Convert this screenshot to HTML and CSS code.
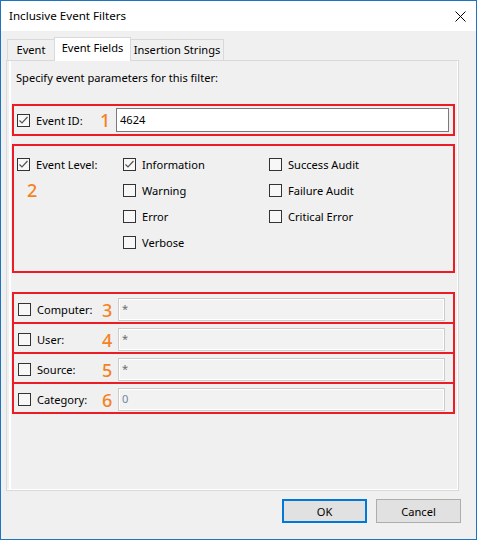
FILE: index.html
```html
<!DOCTYPE html>
<html>
<head>
<meta charset="utf-8">
<link rel="stylesheet" href="styles.css">
</head>
<body>
<div class="window">
  <div class="titlebar">
    <span class="title">Inclusive Event Filters</span>
    <svg class="close" width="11" height="11" viewBox="0 0 11 11"><path d="M0.5 0.5 L10.5 10.5 M10.5 0.5 L0.5 10.5" stroke="#000" stroke-width="1" fill="none"/></svg>
  </div>
  <div class="body">
    <div class="tabs">
      <div class="tab tab-event">Event</div>
      <div class="tab tab-sel">Event Fields</div>
      <div class="tab tab-ins">Insertion Strings</div>
    </div>
    <div class="panel">
      <div class="intro">Specify event parameters for this filter:</div>

      <div class="box box-id">
        <div class="cell-label"><span class="cb checked"><svg width="11" height="11" viewBox="0 0 11 11"><path d="M1.5 5.5 L4 8 L9.5 2" stroke="#555" stroke-width="1.2" fill="none"/></svg></span><span>Event ID:</span></div>
        <div class="num num-id">1</div>
        <div class="input input-id">4624</div>
      </div>

      <div class="box box-level">
        <div class="grid">
          <div class="item"><span class="cb checked"><svg width="11" height="11" viewBox="0 0 11 11"><path d="M1.5 5.5 L4 8 L9.5 2" stroke="#555" stroke-width="1.2" fill="none"/></svg></span><span>Event Level:</span></div>
          <div class="item"><span class="cb checked"><svg width="11" height="11" viewBox="0 0 11 11"><path d="M1.5 5.5 L4 8 L9.5 2" stroke="#555" stroke-width="1.2" fill="none"/></svg></span><span>Information</span></div>
          <div class="item"><span class="cb"></span><span>Success Audit</span></div>
          <div class="num num-two">2</div>
          <div class="item"><span class="cb"></span><span>Warning</span></div>
          <div class="item"><span class="cb"></span><span>Failure Audit</span></div>
          <div></div>
          <div class="item"><span class="cb"></span><span>Error</span></div>
          <div class="item"><span class="cb"></span><span>Critical Error</span></div>
          <div></div>
          <div class="item"><span class="cb"></span><span>Verbose</span></div>
          <div></div>
        </div>
      </div>

      <div class="stack">
        <div class="box row">
          <div class="cell-label2"><span class="cb"></span><span>Computer:</span></div>
          <div class="num num-row">3</div>
          <div class="input disabled">*</div>
        </div>
        <div class="box row">
          <div class="cell-label2"><span class="cb"></span><span>User:</span></div>
          <div class="num num-row">4</div>
          <div class="input disabled">*</div>
        </div>
        <div class="box row">
          <div class="cell-label2"><span class="cb"></span><span>Source:</span></div>
          <div class="num num-row">5</div>
          <div class="input disabled">*</div>
        </div>
        <div class="box row">
          <div class="cell-label2"><span class="cb"></span><span>Category:</span></div>
          <div class="num num-row">6</div>
          <div class="input disabled zero">0</div>
        </div>
      </div>
    </div>
    <div class="footer">
      <div class="btn btn-ok">OK</div>
      <div class="btn btn-cancel">Cancel</div>
    </div>
  </div>
</div>
</body>
</html>
```
FILE: styles.css
```css
* { box-sizing: border-box; }
html, body { margin: 0; padding: 0; }
body {
  width: 477px;
  height: 540px;
  font-family: "Noto Sans", "DejaVu Sans", sans-serif;
  font-size: 11.1px;
  color: #000;
  overflow: hidden;
  white-space: nowrap;
}
.window {
  width: 477px;
  height: 540px;
  border: 1px solid #1e74bf;
  background: #f0f0f0;
  display: flex;
  flex-direction: column;
}
.titlebar {
  height: 30px;
  background: #fff;
  display: flex;
  align-items: center;
  justify-content: space-between;
  padding: 0 10px 0 8px;
}
.title { font-size: 11.6px; line-height: 16px; }
.close { display: block; }
.body {
  flex: 1;
  display: flex;
  flex-direction: column;
  padding: 6px 0 0 5px;
}
.tabs {
  display: flex;
  align-items: flex-end;
  height: 23px;
  margin-left: 1px;
}
.tab {
  height: 21px;
  line-height: 20px;
  text-align: center;
  border-top: 1px solid #d9d9d9;
  background: #f0f0f0;
}
.tab-event { width: 47px; border-left: 1px solid #d9d9d9; }
.tab-sel {
  width: 77px;
  height: 24px;
  line-height: 20px;
  background: #fff;
  border: 1px solid #d9d9d9;
  border-bottom: none;
  margin-bottom: -1px;
  position: relative;
  z-index: 1;
}
.tab-ins { width: 93px; border-right: 1px solid #d9d9d9; }
.panel {
  width: 453px;
  height: 431px;
  border: 1px solid #d9d9d9;
  box-shadow: inset -1px -1px 0 #fff, inset 2px 0 0 #f0f0f0, inset 4px 0 0 #fff;
  padding: 9px 3px 0 5px;
}
.intro { line-height: 16px; padding-left: 4px; }
.box { border: 2px solid #ed1c24; }
.box-id {
  margin-top: 18px;
  height: 32px;
  display: flex;
  align-items: center;
  padding: 0 4px 0 3px;
}
.cell-label, .cell-label2, .item {
  display: flex;
  align-items: center;
  gap: 6px;
}
.cell-label { width: 80px; }
.cb {
  width: 13px;
  height: 13px;
  border: 1px solid #333;
  background: #f7f7f7;
  display: flex;
  align-items: center;
  justify-content: center;
  flex: none;
}
.cb svg { display: block; }
.num {
  color: #f5821f;
  font-size: 18px;
  line-height: 20px;
  font-weight: 500;
}
.num-id { width: 19px; padding-left: 3px; }
.input {
  flex: 1;
  height: 24px;
  line-height: 20px;
  padding: 1px 0 0 3px;
}
.input-id { border: 1px solid #7a7a7a; background: #fff; }
.box-level {
  margin-top: 8px;
  height: 129px;
  padding: 5px 0 0 3px;
}
.grid {
  display: grid;
  grid-template-columns: 106px 146px 1fr;
  grid-auto-rows: 26px;
}
.num-two { padding-left: 10px; align-self: center; }
.stack { margin-top: 19px; display: flex; flex-direction: column; }
.row {
  height: 32px;
  display: flex;
  align-items: center;
  padding: 3px 8px 0 4px;
}
.row + .row { margin-top: -2px; }
.cell-label2 { width: 82px; }
.num-row { width: 18px; padding-left: 2px; }
.disabled {
  height: 23px;
  border: 1px solid #cccccc;
  box-shadow: inset 0 0 0 1px #fff;
  background: #f2f2f2;
  color: #6d6d6d;
  line-height: 18px;
}
.zero { color: #6f87a0; }
.footer {
  display: flex;
  justify-content: flex-end;
  gap: 9px;
  margin-top: 8px;
  padding-right: 15px;
}
.btn {
  height: 24px;
  background: #e1e1e1;
  text-align: center;
  display: flex;
  align-items: center;
  justify-content: center;
}
.btn-ok { width: 85px; border: 2px solid #0078d7; }
.btn-cancel { width: 85px; border: 1px solid #adadad; }
```
